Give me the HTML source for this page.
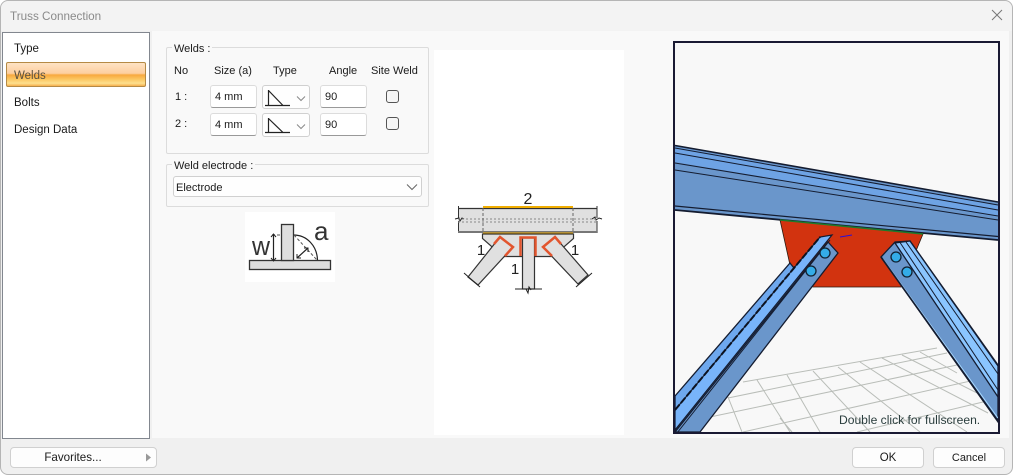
<!DOCTYPE html>
<html><head><meta charset="utf-8"><style>
html,body{margin:0;padding:0;background:#fff}
body{width:1013px;height:475px;overflow:hidden;position:relative;font:11px "Liberation Sans",sans-serif;color:#1a1a1a}
div{box-sizing:border-box}
.a{position:absolute}
.t{position:absolute;white-space:nowrap;line-height:14px}
.l{font-size:11.5px}
.in{position:absolute;background:#fff;border:1px solid #dcdcdc;border-bottom:1px solid #999;border-radius:3px;height:23px;width:47px;padding:4px 0 0 4px;line-height:14px}
.cb{position:absolute;background:#fefefe;border:1px solid #d0d0d0;border-radius:3px;width:48px;height:24px}
.ck{position:absolute;width:13px;height:13px;border:1px solid #555;border-radius:3px;background:#f6f6f6}
.gr{position:absolute;border:1px solid #dcdcdc;border-radius:2px;left:166px;width:263px}
.btn{position:absolute;background:#fdfdfd;border:1px solid #d0d0d0;border-radius:4px;height:21px;text-align:center;line-height:20px;top:447px}
</style></head><body>
<div class="a" style="left:0;top:0;width:1013px;height:475px;background:#f0f0f0;border:1px solid #b5b5b5;border-radius:8px;"></div>
<div class="a" style="left:1px;top:1px;width:1011px;height:30px;background:#f3f3f3;border-radius:8px 8px 0 0"></div>
<div class="t" style="left:10px;top:10px;color:#8a8a8a;font-size:11.7px">Truss Connection</div>
<svg class="a" style="left:990px;top:8px" width="14" height="14"><path d="M2 2L12 12M12 2L2 12" stroke="#777" stroke-width="1" fill="none"/></svg>

<div class="a" style="left:152px;top:31px;width:857px;height:407px;background:#f9f9f9"></div>
<div class="a" style="left:2px;top:32px;width:148px;height:407px;background:#fff;border:1px solid #82878f"></div>
<div class="a" style="left:6px;top:62px;width:140px;height:25px;border:1px solid #b58a45;border-radius:2px;background:linear-gradient(#fee3c4 0,#fdcf9f 45%,#f8a93f 52%,#fbc560 70%,#fde08e 88%,#f6b04e 100%)"></div>
<div class="t l" style="left:14px;top:42px">Type</div>
<div class="t l" style="left:14px;top:69px;color:#5a5140">Welds</div>
<div class="t l" style="left:14px;top:96px">Bolts</div>
<div class="t l" style="left:14px;top:123px">Design Data</div>

<div class="gr" style="top:47px;height:107px"></div>
<div class="t" style="left:172px;top:42px;background:#f9f9f9;padding:0 2px">Welds :</div>
<div class="t" style="left:174px;top:64px">No</div>
<div class="t" style="left:214px;top:64px">Size (a)</div>
<div class="t" style="left:273px;top:64px">Type</div>
<div class="t" style="left:329px;top:64px">Angle</div>
<div class="t" style="left:371px;top:64px">Site Weld</div>
<div class="t" style="left:175px;top:90px">1 :</div>
<div class="t" style="left:175px;top:117px">2 :</div>

<div class="in" style="left:210px;top:85px">4 mm</div>
<div class="cb" style="left:262px;top:85px"><svg class="a" style="left:0;top:0" width="46" height="22"><path d="M2 19.500H27M5.500 4V19.500L20 19.500M5.500 4.500L20 19.500" stroke="#222" stroke-width="1.200" fill="none"/><path d="M34 10.500l4 4 4-4" stroke="#888" fill="none"/></svg></div>
<div class="in" style="left:320px;top:85px">90</div>
<div class="ck" style="left:386px;top:90px"></div>

<div class="in" style="left:210px;top:113px">4 mm</div>
<div class="cb" style="left:262px;top:113px"><svg class="a" style="left:0;top:0" width="46" height="22"><path d="M2 18.500H27M5.500 4V18.500M5.500 4.500L20 18.500" stroke="#222" stroke-width="1.200" fill="none"/><path d="M34 10.500l4 4 4-4" stroke="#888" fill="none"/></svg></div>
<div class="in" style="left:320px;top:113px">90</div>
<div class="ck" style="left:386px;top:117px"></div>

<div class="gr" style="top:164px;height:43px"></div>
<div class="t" style="left:172px;top:159px;background:#f9f9f9;padding:0 2px">Weld electrode :</div>
<div class="a" style="left:173px;top:176px;width:249px;height:21px;background:#fefefe;border:1px solid #d0d0d0;border-radius:3px"></div>
<div class="t" style="left:176px;top:181px">Electrode</div>
<svg class="a" style="left:405px;top:182px" width="14" height="10"><path d="M2 2.500l5 5 5-5" stroke="#666" fill="none"/></svg>

<!-- weld detail thumbnail -->
<svg class="a" style="left:245px;top:212px" width="90" height="70">
<rect width="90" height="70" fill="#fff"/>
<rect x="4.500" y="48.500" width="81" height="9" fill="#dedede" stroke="#333" stroke-width="1.300"/>
<rect x="36.500" y="12.500" width="12" height="36" fill="#dedede" stroke="#333" stroke-width="1.300"/>
<path d="M48.500 23C62 23 72 34 72.500 48" fill="none" stroke="#222" stroke-width="1.200"/>
<path d="M27 23H37M49 23L72 48" fill="none" stroke="#555" stroke-dasharray="3 2"/>
<path d="M28.500 23V48M52 46L63 36" fill="none" stroke="#222" stroke-width="1.200"/>
<path d="M26 25L28.500 22L31 25M26 46L28.500 49L31 46M52 42V46H56M59 36H63V40" fill="none" stroke="#222"/>
<text x="7" y="43" font-family="Liberation Sans" font-size="27" fill="#333" textLength="18" lengthAdjust="spacingAndGlyphs">w</text>
<text x="69" y="28" font-family="Liberation Sans" font-size="26" fill="#333">a</text>
</svg>

<!-- section diagram -->
<svg class="a" style="left:434px;top:50px" width="190" height="385">
<rect width="190" height="385" fill="#fff"/>
<g transform="translate(-434,-50)">
<rect x="458" y="208" width="139" height="24" fill="#e0e0e0"/>
<path d="M458.500 206V218M458.500 221V233M597 206V218M597 221V233" stroke="#333" fill="none"/>
<path d="M458 208.500H597" stroke="#333" stroke-width="1.200"/>
<rect x="458" y="231" width="139" height="2" fill="#777"/>
<path d="M455 219l4-1 1 3 2-3 2 1M592 219l3-2 1 3 3-2 3 1" stroke="#222" fill="none"/>
<path d="M458 219H597M458 222H597" stroke="#888" stroke-dasharray="2 2" fill="none"/>
<path d="M483 208V233M573 208V233" stroke="#666" stroke-dasharray="3 2" fill="none"/>
<path d="M483 207H573" stroke="#f0ad00" stroke-width="2"/>
<path d="M483 233.500H573" stroke="#f0ad00" stroke-width="2"/>
<path d="M482.500 234V238.500L503 256.500H553L573.500 238.500V234Z" fill="#e0e0e0" stroke="#333" stroke-width="1.200"/>
<polygon points="500,237 513,247 478,285 468,277" fill="#e0e0e0" stroke="#333" stroke-width="1.200"/>
<polygon points="555,237 543,247 578,284 588,275" fill="#e0e0e0" stroke="#333" stroke-width="1.200"/>
<rect x="522.500" y="238" width="12" height="51" fill="#e0e0e0" stroke="#333" stroke-width="1.200"/>
<path d="M494 244L500 237L513 247L505 256" fill="none" stroke="#e2552e" stroke-width="2.500"/>
<path d="M561 244L555 237L543 247L552 256" fill="none" stroke="#e2552e" stroke-width="2.500"/>
<path d="M520.500 256V237.500H535.500V256" fill="none" stroke="#e2552e" stroke-width="2.500"/>
<path d="M515 289H542M464 273L480 287M576 287L592 273" stroke="#222" fill="none"/>
<path d="M526 289l2 4 1-6 2 3" stroke="#222" fill="none"/>
<text x="528" y="204" text-anchor="middle" font-family="Liberation Sans" font-size="16" fill="#222">2</text>
<text x="481" y="255" text-anchor="middle" font-family="Liberation Sans" font-size="15" fill="#222">1</text>
<text x="575" y="255" text-anchor="middle" font-family="Liberation Sans" font-size="15" fill="#222">1</text>
<text x="515" y="274" text-anchor="middle" font-family="Liberation Sans" font-size="15" fill="#222">1</text>
</g>
</svg>

<!-- 3D view -->
<svg class="a" style="left:673px;top:41px" width="328" height="394" viewBox="673 41 328 394">
<rect x="673" y="41" width="327" height="393" fill="#f8f8f8"/>
<g stroke="#b9bdb8" stroke-width="1" fill="none">
<path d="M937 348L743 382M947 353L728 398M957 365L710 417M975 380L743 432M983 402L857 432"/>
<path d="M757 380L790 432M787 375L820 432M813 371L870 432M838 367L920 432M860 362L967 432M882 358L988 413M902 355L977 393M920 352L957 373M728 397L742 432M780 418L792 432"/>
</g>
<polygon points="675,145 998,202 998,240 675,210" fill="#6a96cb"/>
<polygon points="675,147 998,205 998,217 675,162" fill="#6ea3e4"/>
<g stroke="#141c30" fill="none">
<path d="M675 145.500L998 202" stroke-width="1.600"/>
<path d="M675 148L998 205" stroke-width="1"/>
<path d="M675 153L998 210" stroke-width="1"/>
<path d="M675 163L998 216" stroke-width="1"/>
<path d="M675 170L998 220" stroke-width="1"/>
<path d="M675 206L998 236.500" stroke-width="1.200"/>
<path d="M675 210L998 240" stroke-width="1.800"/>
</g>
<polygon points="780,220 923,234 901,287 813,287 790,265" fill="#d2330f" stroke="#2a1a10" stroke-width=".8"/>
<path d="M780 220L923 234" stroke="#1c7a2c" stroke-width="1.500"/>
<path d="M840 237L852 235" stroke="#2a10d8" stroke-width="1"/>
<polygon points="675,396 790,263 805,282 675,432" fill="#6ea8ee" stroke="#141c30" stroke-width="1.300"/>
<polygon points="675,410 820,237 832,235 675,430" fill="#78b4fa" stroke="#141c30" stroke-width="1.200"/>
<path d="M675 410L820 237" stroke="#0c1220" stroke-width="2" stroke-dasharray="7 2" fill="none"/>
<polygon points="828,242 838,253 700,432 675,432" fill="#6a96cb" stroke="#141c30" stroke-width="1.300"/>
<path d="M677 433L830 240" stroke="#141c30" fill="none"/>
<circle cx="825" cy="253" r="5" fill="#34ace8" stroke="#123" stroke-width="1.300"/>
<circle cx="811" cy="271" r="5" fill="#34ace8" stroke="#123" stroke-width="1.300"/>
<polygon points="881,257 895,242 910,241 998,365 998,422" fill="#6a96cb" stroke="#141c30" stroke-width="1.300"/>
<polygon points="895,243 910,241 998,366 998,397" fill="#8ac5ff" stroke="#141c30" stroke-width="1.300"/>
<path d="M900 242.500L998 390M906 242L998 374" stroke="#141c30" fill="none"/>
<path d="M883 259L998 418" stroke="#a8d8ff" stroke-width="1" fill="none"/>
<path d="M881 257L998 421" stroke="#141c30" stroke-width="1.600" fill="none"/>
<circle cx="896" cy="257" r="5" fill="#34ace8" stroke="#123" stroke-width="1.300"/>
<circle cx="907" cy="272" r="5" fill="#34ace8" stroke="#123" stroke-width="1.300"/>
<rect x="674" y="42" width="325" height="391" fill="none" stroke="#1a1a33" stroke-width="2"/>
<text x="839" y="424" font-family="Liberation Sans" font-size="12.100" fill="#2a3d3d">Double click for fullscreen.</text>
</svg>

<div class="btn" style="left:10px;width:147px;padding-right:21px;font-size:11.6px">Favorites...</div>
<svg class="a" style="left:145px;top:453px" width="8" height="10"><path d="M1 0.500L6 4.500L1 8.500Z" fill="#999"/></svg>
<div class="btn" style="left:852px;width:72px;font-size:11.5px">OK</div>
<div class="btn" style="left:933px;width:72px">Cancel</div>
</body></html>
